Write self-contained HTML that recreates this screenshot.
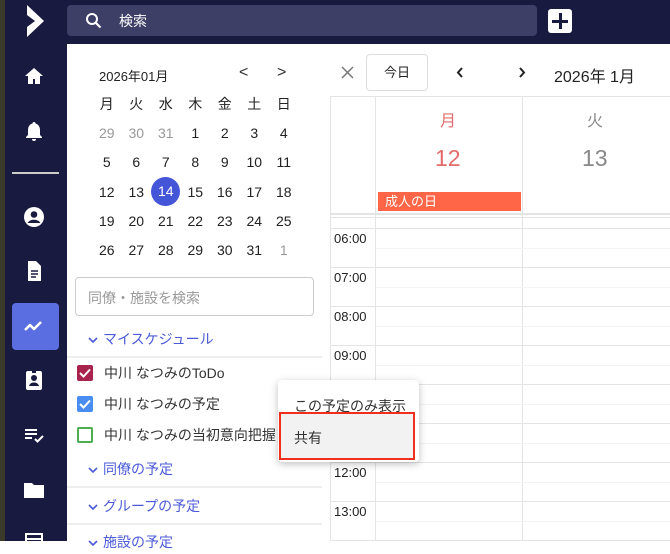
<!DOCTYPE html>
<html><head><meta charset="utf-8"><style>
*{margin:0;padding:0;box-sizing:border-box}
body{width:670px;height:541px;overflow:hidden;position:relative;background:#fff;font-family:"Liberation Sans","Noto Sans CJK JP",sans-serif;color:#222}
.abs{position:absolute}
#side{left:0;top:0;width:67px;height:541px;background:#181a40}
#top{left:67px;top:0;width:603px;height:44px;background:#181a40}
.ic{position:absolute;left:22px;width:24px;height:24px}
.cal td{width:29.5px;height:29.3px;text-align:center;font-size:14px;color:#222}
.line{position:absolute;background:#e4e4e4}
.tl{position:absolute;left:334px;font-size:13px;color:#222}
.chk{position:absolute;left:77px;width:16px;height:16px;border-radius:2px}
.item{position:absolute;left:104px;font-size:14px;color:#333}
.sec{position:absolute;left:88px;font-size:14px;color:#4a5ad8}
.sec svg{vertical-align:middle;margin-right:5px}
</style></head><body>
<div class="abs" id="side"></div>
<div class="abs" style="left:0;top:0;width:5px;height:541px;background:#3b3a2a"></div>
<div class="abs" id="top"></div>
<svg class="abs" style="left:26px;top:5px" width="20" height="32" viewBox="0 0 20 32"><path d="M1 0 L18 16 L1 32 L1 22 L9 16 L1 10Z" fill="#fff"/></svg>
<div class="abs" style="left:67px;top:5px;width:470px;height:31px;background:#3d3f66;border-radius:4px"></div>
<svg class="abs" style="left:85px;top:12px" width="17" height="17" viewBox="0 0 17 17"><circle cx="7" cy="7" r="5" fill="none" stroke="#fff" stroke-width="2"/><path d="M11 11L15.5 15.5" stroke="#fff" stroke-width="2.2"/></svg>
<div class="abs" style="left:119px;top:11px;color:#fff;font-size:14px">検索</div>
<div class="abs" style="left:548px;top:9px;width:24px;height:24px;background:#fff;border-radius:3px"></div>
<div class="abs" style="left:552px;top:19.5px;width:16px;height:3px;background:#181a40"></div>
<div class="abs" style="left:558.5px;top:13px;width:3px;height:16px;background:#181a40"></div>
<svg class="ic" style="top:64px" viewBox="0 0 24 24"><path d="M12 4L3 12h3v8h5v-5h2v5h5v-8h3z" fill="#fff"/></svg>
<svg class="ic" style="top:119px" viewBox="0 0 24 24"><path d="M12 3c-1 0-1.5.7-1.5 1.5C7.5 5.3 6 8 6 11v5l-2 2v1h16v-1l-2-2v-5c0-3-1.5-5.7-4.5-6.5C13.5 3.7 13 3 12 3zM10 20a2 2 0 004 0z" fill="#fff"/></svg>
<div class="abs" style="left:12px;top:172px;width:47px;height:1.5px;background:#ccc"></div>
<svg class="ic" style="top:205px" viewBox="0 0 24 24"><circle cx="12" cy="12" r="10" fill="#fff"/><circle cx="12" cy="9.5" r="3.3" fill="#181a40"/><path d="M5.5 18c1.5-2.5 4-3.3 6.5-3.3s5 .8 6.5 3.3" fill="#181a40"/></svg>
<svg class="ic" style="top:259px" viewBox="0 0 24 24"><path d="M6 2h8l5 5v15H6z" fill="#fff"/><path d="M9 12h7M9 15h7M9 18h5" stroke="#181a40" stroke-width="1.5"/></svg>
<div class="abs" style="left:12px;top:303px;width:47px;height:47px;background:#5b6ee1;border-radius:4px"></div>
<svg class="ic" style="top:314px" viewBox="0 0 24 24"><path d="M3 16l5-5 4 4 7-7" fill="none" stroke="#fff" stroke-width="2.5" stroke-linejoin="round"/></svg>
<svg class="ic" style="top:368px" viewBox="0 0 24 24"><rect x="4" y="3" width="16" height="19" rx="2" fill="#fff"/><circle cx="12" cy="10" r="3" fill="#181a40"/><path d="M7 18c1-3 3-3.5 5-3.5s4 .5 5 3.5z" fill="#181a40"/><rect x="10" y="2" width="4" height="3" fill="#181a40"/></svg>
<svg class="ic" style="top:423px" viewBox="0 0 24 24"><path d="M3 7h12M3 11h12M3 15h7" stroke="#fff" stroke-width="2"/><path d="M13 16l2.5 2.5L21 13" fill="none" stroke="#fff" stroke-width="2"/></svg>
<svg class="ic" style="top:478px" viewBox="0 0 24 24"><path d="M2 5h8l2 2h10v13H2z" fill="#fff"/></svg>
<svg class="ic" style="top:530px" viewBox="0 0 24 24"><rect x="4" y="4" width="16" height="16" fill="none" stroke="#fff" stroke-width="2"/><path d="M4 9h16" stroke="#fff" stroke-width="2"/></svg>
<div class="abs" style="left:99px;top:66px;font-size:13px;color:#222">2026年01月</div>
<div class="abs" style="left:239px;top:64px;font-size:16px;color:#333">&lt;</div>
<div class="abs" style="left:277px;top:64px;font-size:16px;color:#333">&gt;</div>
<table class="abs cal" style="left:92px;top:89px;border-collapse:collapse">
<tr><td>月</td><td>火</td><td>水</td><td>木</td><td>金</td><td>土</td><td>日</td></tr>
<tr><td style="color:#999">29</td><td style="color:#999">30</td><td style="color:#999">31</td><td>1</td><td>2</td><td>3</td><td>4</td></tr>
<tr><td>5</td><td>6</td><td>7</td><td>8</td><td>9</td><td>10</td><td>11</td></tr>
<tr><td>12</td><td>13</td><td><span style="display:inline-block;width:29px;height:29px;line-height:29px;border-radius:50%;background:#4455d8;color:#fff">14</span></td><td>15</td><td>16</td><td>17</td><td>18</td></tr>
<tr><td>19</td><td>20</td><td>21</td><td>22</td><td>23</td><td>24</td><td>25</td></tr>
<tr><td>26</td><td>27</td><td>28</td><td>29</td><td>30</td><td>31</td><td style="color:#999">1</td></tr>
</table>
<div class="abs" style="left:75px;top:277px;width:239px;height:39px;border:1px solid #ccc;border-radius:4px"></div>
<div class="abs" style="left:88px;top:288px;font-size:14px;color:#999">同僚・施設を検索</div>
<div class="sec" style="top:329px"><svg width="10" height="7"><path d="M1 1l4 4 4-4" fill="none" stroke="#4a5ad8" stroke-width="1.6"/></svg>マイスケジュール</div>
<div class="abs" style="left:67px;top:356px;width:255px;height:1.5px;background:#eee"></div>
<div class="chk" style="top:365px;background:#a8234e"></div>
<div class="chk" style="top:396px;background:#4a8df2"></div>
<svg class="abs" style="left:79px;top:368px" width="12" height="10"><path d="M1 5l3.5 3.5L11 1.5" stroke="#fff" stroke-width="2" fill="none"/></svg>
<svg class="abs" style="left:79px;top:399px" width="12" height="10"><path d="M1 5l3.5 3.5L11 1.5" stroke="#fff" stroke-width="2" fill="none"/></svg>
<div class="chk" style="top:427px;border:2px solid #4caf50"></div>
<div class="item" style="top:363px">中川 なつみのToDo</div>
<div class="item" style="top:394px">中川 なつみの予定</div>
<div class="item" style="top:425px">中川 なつみの当初意向把握</div>
<div class="sec" style="top:459px"><svg width="10" height="7"><path d="M1 1l4 4 4-4" fill="none" stroke="#4a5ad8" stroke-width="1.6"/></svg>同僚の予定</div>
<div class="abs" style="left:67px;top:486px;width:255px;height:1.5px;background:#eee"></div>
<div class="sec" style="top:496px"><svg width="10" height="7"><path d="M1 1l4 4 4-4" fill="none" stroke="#4a5ad8" stroke-width="1.6"/></svg>グループの予定</div>
<div class="abs" style="left:67px;top:523px;width:255px;height:1.5px;background:#eee"></div>
<div class="sec" style="top:532px"><svg width="10" height="7"><path d="M1 1l4 4 4-4" fill="none" stroke="#4a5ad8" stroke-width="1.6"/></svg>施設の予定</div>
<div class="abs" style="left:322px;top:44px;width:8px;height:497px;background:#fff"></div>
<svg class="abs" style="left:341px;top:66px" width="13" height="13"><path d="M1 1l11 11M12 1L1 12" stroke="#777" stroke-width="1.5"/></svg>
<div class="abs" style="left:366px;top:54px;width:62px;height:37px;border:1px solid #ddd;border-radius:4px;text-align:center;line-height:35px;font-size:13px">今日</div>
<svg class="abs" style="left:456px;top:67px" width="8" height="11"><path d="M6 1L2 5.5 6 10" fill="none" stroke="#222" stroke-width="2"/></svg>
<svg class="abs" style="left:518px;top:67px" width="8" height="11"><path d="M2 1l4 4.5L2 10" fill="none" stroke="#222" stroke-width="2"/></svg>
<div class="abs" style="left:554px;top:63px;font-size:16px;color:#222">2026年 1月</div>
<div class="line" style="left:330px;top:96px;width:340px;height:1px"></div>
<div class="line" style="left:330px;top:96px;width:1px;height:445px"></div>
<div class="line" style="left:375px;top:96px;width:1px;height:445px"></div>
<div class="line" style="left:522px;top:96px;width:1px;height:445px"></div>
<div class="abs" style="left:440px;top:107px;font-size:16px;color:#e36b6b">月</div>
<div class="abs" style="left:587px;top:107px;font-size:16px;color:#888">火</div>
<div class="abs" style="left:435px;top:145px;font-size:23px;color:#e36b6b">12</div>
<div class="abs" style="left:582px;top:145px;font-size:23px;color:#888">13</div>
<div class="abs" style="left:378px;top:192px;width:143px;height:19px;background:#ff6647;color:#fff;font-size:13px;padding-left:7px;line-height:19px">成人の日</div>
<div class="line" style="left:330px;top:213px;width:340px;height:1.5px"></div>
<div class="line" style="left:330px;top:217px;width:340px;height:1px"></div>
<div class="line" style="left:330px;top:228px;width:340px;height:1px"></div>
<div class="line" style="left:330px;top:267px;width:340px;height:1px"></div>
<div class="line" style="left:330px;top:306px;width:340px;height:1px"></div>
<div class="line" style="left:330px;top:345px;width:340px;height:1px"></div>
<div class="line" style="left:330px;top:384px;width:340px;height:1px"></div>
<div class="line" style="left:330px;top:423px;width:340px;height:1px"></div>
<div class="line" style="left:330px;top:462px;width:340px;height:1px"></div>
<div class="line" style="left:330px;top:501px;width:340px;height:1px"></div>
<div class="line" style="left:330px;top:540px;width:340px;height:1px"></div>
<div class="abs" style="left:376px;top:248px;width:294px;height:1px;background:#f3f3f3"></div>
<div class="abs" style="left:376px;top:287px;width:294px;height:1px;background:#f3f3f3"></div>
<div class="abs" style="left:376px;top:326px;width:294px;height:1px;background:#f3f3f3"></div>
<div class="abs" style="left:376px;top:365px;width:294px;height:1px;background:#f3f3f3"></div>
<div class="abs" style="left:376px;top:404px;width:294px;height:1px;background:#f3f3f3"></div>
<div class="abs" style="left:376px;top:443px;width:294px;height:1px;background:#f3f3f3"></div>
<div class="abs" style="left:376px;top:482px;width:294px;height:1px;background:#f3f3f3"></div>
<div class="abs" style="left:376px;top:521px;width:294px;height:1px;background:#f3f3f3"></div>
<div class="tl" style="top:231px">06:00</div>
<div class="tl" style="top:270px">07:00</div>
<div class="tl" style="top:309px">08:00</div>
<div class="tl" style="top:348px">09:00</div>
<div class="tl" style="top:465px">12:00</div>
<div class="tl" style="top:504px">13:00</div>
<div class="abs" style="left:278px;top:380px;width:141px;height:82px;background:#fff;border-radius:4px;box-shadow:0 2px 8px rgba(0,0,0,.25)"></div>
<div class="abs" style="left:294px;top:396px;font-size:14px;color:#333">この予定のみ表示</div>
<div class="abs" style="left:279px;top:412px;width:136px;height:48px;background:#f2f2f2;border:2px solid #f0301c"></div>
<div class="abs" style="left:294px;top:428px;font-size:14px;color:#333">共有</div>
</body></html>
